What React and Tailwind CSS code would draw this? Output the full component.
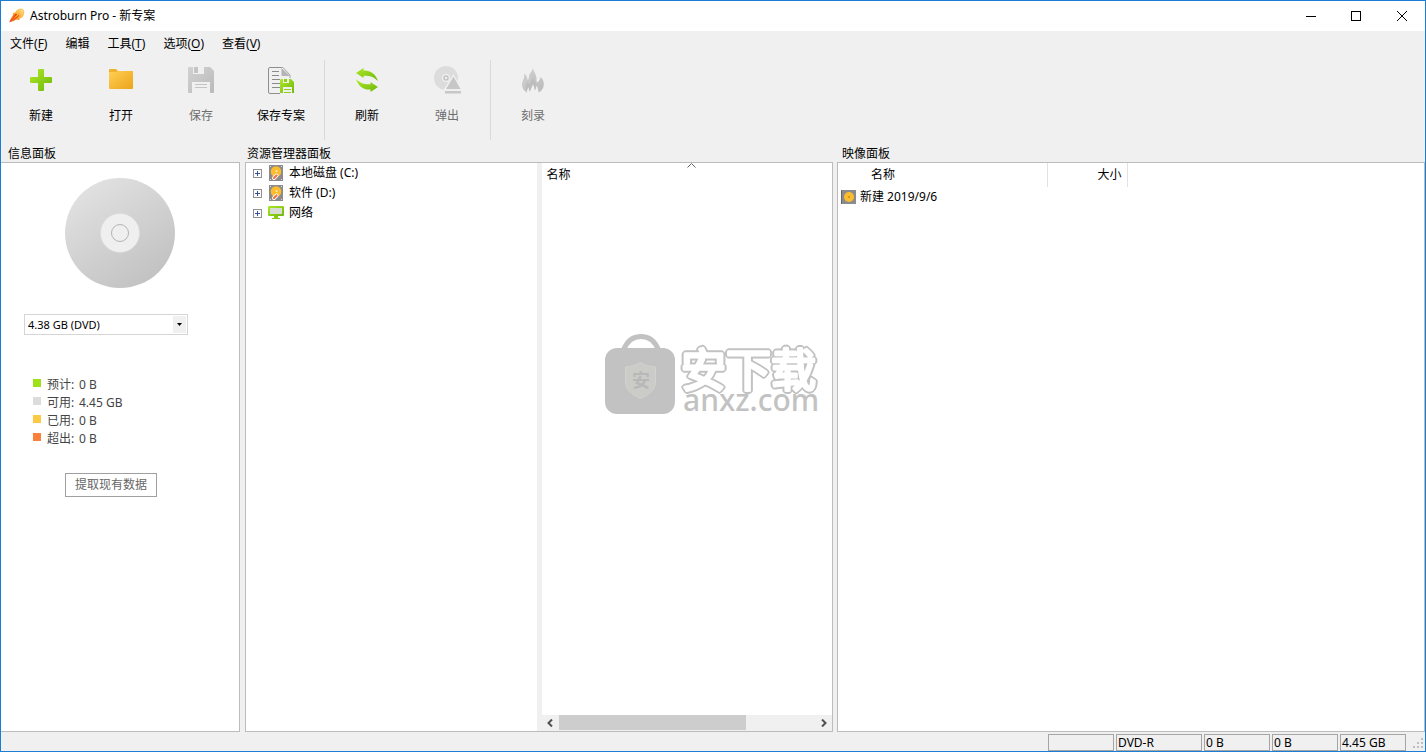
import { useState } from "react";

const menus = [
  { label: "文件", key: "F" },
  { label: "编辑" },
  { label: "工具", key: "T" },
  { label: "选项", key: "O" },
  { label: "查看", key: "V" },
];

const stats = [
  { label: "预计:", value: "0 B", color: "bg-[#a0e21a]" },
  { label: "可用:", value: "4.45 GB", color: "bg-[#dcdcdc]" },
  { label: "已用:", value: "0 B", color: "bg-[#fcc945]" },
  { label: "超出:", value: "0 B", color: "bg-[#fb813a]" },
];

const Gradients = () => (
  <svg width="0" height="0" className="absolute" aria-hidden="true">
    <defs>
      <linearGradient id="green" x1="0" y1="0" x2="1" y2="1">
        <stop offset="0" stopColor="#aeea26" />
        <stop offset="1" stopColor="#6fb60c" />
      </linearGradient>
      <linearGradient id="yellow" x1="0" y1="0" x2="1" y2="1">
        <stop offset="0" stopColor="#ffd055" />
        <stop offset="1" stopColor="#eca31a" />
      </linearGradient>
      <linearGradient id="gray" x1="0" y1="0" x2="1" y2="1">
        <stop offset="0" stopColor="#d2d2d2" />
        <stop offset="1" stopColor="#bababa" />
      </linearGradient>
      <linearGradient id="disc" x1="0.1" y1="0" x2="0.8" y2="1">
        <stop offset="0" stopColor="#e4e4e4" />
        <stop offset="1" stopColor="#c0c0c0" />
      </linearGradient>
      <linearGradient id="fire" x1="1" y1="0" x2="0" y2="1">
        <stop offset="0" stopColor="#fff0b0" />
        <stop offset="0.5" stopColor="#ffa51f" />
        <stop offset="1" stopColor="#f0582a" />
      </linearGradient>
    </defs>
  </svg>
);

const AppLogo = () => (
  <svg width="16" height="16" viewBox="0 0 16 16">
    <path d="M0.3 14.2C1.6 11 2.4 9 4 7.2L3.8 5.6L6.6 4C7.6 1.6 9.6 0.4 11.8 0.5C14.4 0.6 15.8 2.4 15.3 5.2C15 8 13 10.2 10.4 10.6L10.6 12L7 11.6C5 13 3 14 0.3 14.2Z" fill="url(#fire)" />
    <path d="M7.6 4.8C9 2 11 1.1 12.6 1.3C14.4 1.7 15 3.4 14.4 5.4C13.8 7.4 12.2 9 10.4 9.6" fill="none" stroke="#f7c56b" />
    <path d="M1.4 13.2L8 6M4.4 12L10 7.4M4.2 8.4L7 6.2" stroke="#e8431c" strokeWidth="1" />
  </svg>
);

const NewIcon = () => (
  <svg width="30" height="30" viewBox="0 0 30 30">
    <path d="M13 4H17Q18 4 18 5V12H25Q26 12 26 13V17Q26 18 25 18H18V25Q18 26 17 26H13Q12 26 12 25V18H5Q4 18 4 17V13Q4 12 5 12H12V5Q12 4 13 4Z" fill="url(#green)" />
  </svg>
);

const OpenIcon = () => (
  <svg width="30" height="30" viewBox="0 0 30 30">
    <path d="M3 5Q3 4 4 4H10L12 6H26Q27 6 27 7V12H3Z" fill="#efb02e" />
    <path d="M3 7H10L12 6H27V23Q27 24 26 24H4Q3 24 3 23Z" fill="url(#yellow)" />
  </svg>
);

const SaveIcon = () => (
  <svg width="30" height="30" viewBox="0 0 30 30">
    <path d="M2 3Q2 2 3 2H7V9H18V2H24L28 6V27Q28 28 27 28H24V17H6V28H3Q2 28 2 27Z" fill="url(#gray)" />
    <path d="M8 2H12V8H8Z" fill="#c4c4c4" />
    <path d="M9 19.500H21M9 22.500H21" stroke="#c4c4c4" />
  </svg>
);

const SaveProjectIcon = () => (
  <svg width="30" height="30" viewBox="0 0 30 30">
    <path d="M15 2.500H4Q2.500 2.500 2.500 4V27Q2.500 28.500 4 28.500H14" fill="none" stroke="#8f8f8f" />
    <path d="M15 2.500H17L24 10V13" fill="none" stroke="#a5a5a5" />
    <path d="M15.500 3V11H24Z" fill="#b4b4b4" />
    <path d="M6 6.500H13M6 10.500H13M6 14.500H14M6 18.500H14M6 22.500H14" stroke="#8b8b8b" />
    <path d="M15 14H17V18H23V14H25L28 17V28H26V22H17V28H14V15Z" fill="url(#green)" />
    <path d="M18 14H21V17H18Z" fill="#8fcf17" />
    <path d="M18 24.500H25M18 27.500H25" stroke="#8fcf17" />
  </svg>
);

const RefreshIcon = () => (
  <svg width="30" height="30" viewBox="0 0 30 30">
    <path d="M4 8L11.500 3V5.500C18 5 23.500 8.500 26 16C21.500 11.500 17 10.500 11.500 10.700V13Z" fill="url(#green)" />
    <path d="M26 22L18.500 27V24.500C11.500 25 6.500 21.500 4 14C8.500 18.500 13 19.500 18.500 19.200V17Z" fill="url(#green)" />
  </svg>
);

const EjectIcon = () => (
  <svg width="30" height="30" viewBox="0 0 30 30">
    <circle cx="14" cy="13" r="12" fill="#dcdcdc" />
    <circle cx="14" cy="13" r="4" fill="#f0f0f0" />
    <circle cx="14" cy="13" r="2" fill="none" stroke="#c2c2c2" strokeWidth="1.500" />
    <path d="M21.500 9L30 24V30H12V24Z" fill="#f0f0f0" />
    <path d="M21.500 11.500L28.500 24H14Z" fill="#c7c7c7" />
    <path d="M13 26H29V28.500H13Z" fill="#c7c7c7" />
  </svg>
);

const BurnIcon = () => (
  <svg width="30" height="30" viewBox="0 0 30 30">
    <path d="M15 3C15.500 7 18.500 9.500 18.500 13.500C18.500 15.500 18.500 16.500 19 17.500C20.500 16.500 22.500 15 22.500 12C25 14 26.500 17.500 25.500 21.500C25 24 23 26.500 20.500 27.500C20.500 25 19.500 22 18.500 20.500C18 22 17.500 24 17 25.500C16.500 23 16 21 15 19C14 21.500 12.500 24 12 26.500C11 25 11 23.500 10.500 22C9 24 9 25.500 9 27.500C5.500 26 4 23 4 19.500C4 17 5 15.500 5.500 14C6.500 12.500 6.500 10.500 6 8.500C8.500 10 9.500 12.500 9.500 15C10.500 14.500 11 13 11 11.500C11 8.500 14 7 15 3Z" fill="url(#gray)" />
    <path d="M15 12C15.500 15 18 16.500 18.500 20.500C18 22 17.500 24 17 25.500C16.500 23 16 21 15 19C14 21.500 12.500 24 12 26.500C11 25 11 23.500 10.500 22C9 24 9 25.500 9 27.500C7 25 7 20 9.500 17.500C10.500 18 11 18.500 11.500 19.500C12 16.500 14.500 15 15 12Z" fill="#bdbdbd" />
  </svg>
);

const DriveIcon = () => (
  <svg width="14" height="16" viewBox="0 0 14 16">
    <rect width="14" height="16" fill="#8b8b8b" />
    <path d="M1 1h1v1h-1zM12 1h1v1h-1zM1 14h1v1h-1zM12 14h1v1h-1z" fill="#ddd" />
    <circle cx="7" cy="6.500" r="5.300" fill="#fbbd2e" />
    <circle cx="7.500" cy="6" r="1" fill="#fff0c0" />
    <path d="M5 13L7.500 10.500" stroke="#fff" strokeWidth="4" strokeLinecap="round" />
    <path d="M5 13L7.500 10.500" stroke="#ef7843" strokeWidth="2.400" strokeLinecap="round" />
  </svg>
);

const NetworkIcon = () => (
  <svg width="16" height="14" viewBox="0 0 16 14">
    <rect width="16" height="10" rx="1" fill="url(#green)" />
    <rect x="2" y="2" width="12" height="6" fill="#d9dcd5" />
    <path d="M6 10H10V12H12V13H4V12H6Z" fill="#86c913" />
  </svg>
);

const DiscImageIcon = () => (
  <svg width="15" height="14" viewBox="0 0 15 14">
    <rect width="15" height="14" fill="#8b8b8b" />
    <path d="M0.500 0V14" stroke="#666" />
    <circle cx="8" cy="7" r="5" fill="#fbbd2e" />
    <circle cx="8" cy="7" r="1" fill="#c98e12" />
  </svg>
);

const tools = [
  [
    { label: "新建", icon: <NewIcon /> },
    { label: "打开", icon: <OpenIcon /> },
    { label: "保存", icon: <SaveIcon />, disabled: true },
    { label: "保存专案", icon: <SaveProjectIcon /> },
  ],
  [
    { label: "刷新", icon: <RefreshIcon /> },
    { label: "弹出", icon: <EjectIcon />, disabled: true },
  ],
  [{ label: "刻录", icon: <BurnIcon />, disabled: true }],
];

const tree = [
  { label: "本地磁盘 (C:)", icon: <DriveIcon /> },
  { label: "软件 (D:)", icon: <DriveIcon /> },
  { label: "网络", icon: <NetworkIcon /> },
];

const TitleBar = () => (
  <header className="h-[30px] shrink-0 bg-white flex items-center pl-2">
    <AppLogo />
    <h1 className="ml-[5px] flex-1">Astroburn Pro - 新专案</h1>
    <button aria-label="最小化" className="w-[45px] h-full flex items-center justify-center">
      <svg width="10" height="10"><path d="M0 5.500H10" stroke="#000" /></svg>
    </button>
    <button aria-label="最大化" className="w-[45px] h-full flex items-center justify-center">
      <svg width="10" height="10"><rect x="0.500" y="0.500" width="9" height="9" fill="none" stroke="#000" /></svg>
    </button>
    <button aria-label="关闭" className="w-[47px] h-full flex items-center justify-center">
      <svg width="10" height="10"><path d="M0 0L10 10M10 0L0 10" stroke="#000" /></svg>
    </button>
  </header>
);

const ToolButton = ({ label, icon, disabled }) => (
  <button disabled={disabled} className="w-20 pt-2 flex flex-col items-center gap-[13px] text-black disabled:text-[#6d6d6d]">
    {icon}
    <span>{label}</span>
  </button>
);

const Panel = ({ title, className, titleClass, boxClass, children }) => (
  <section className={`flex flex-col min-w-0 ${className}`}>
    <h2 className={`h-4 shrink-0 ${titleClass}`}>{title}</h2>
    <div className={`flex-1 min-h-0 bg-white border border-[#bcbcbc] ${boxClass}`}>{children}</div>
  </section>
);

const InfoPanel = () => {
  const [size, setSize] = useState("dvd");

  return (
    <Panel title="信息面板" className="w-[239px] mr-px shrink-0" titleClass="pl-[7px]" boxClass="border-l-0">
      <svg width="110" height="110" viewBox="0 0 110 110" className="mx-auto mt-[15px]">
        <circle cx="55" cy="55" r="55" fill="url(#disc)" />
        <circle cx="55" cy="55" r="19.500" fill="#efefef" stroke="#dadada" strokeWidth="0.500" />
        <circle cx="55" cy="55" r="8.500" fill="none" stroke="#b4b4b4" />
      </svg>
      <div className="relative w-[164px] ml-[23px] mt-[26px]">
        <select
          aria-label="光盘容量"
          value={size}
          onChange={(e) => setSize(e.target.value)}
          className="block w-full h-[21px] appearance-none border border-[#d5d5d5] bg-white pl-[3px] text-[11px] leading-4 text-black"
        >
          <option value="dvd">4.38 GB (DVD)</option>
        </select>
        <span className="absolute right-[2px] top-[2px] w-[13px] h-[17px] bg-[#f0f0f0] flex items-center justify-center pointer-events-none">
          <svg width="5" height="3"><path d="M0 0H5L2.500 3Z" fill="#000" /></svg>
        </span>
      </div>
      <ul className="mt-10 ml-8 text-[#444] leading-5">
        {stats.map((s) => (
          <li key={s.label} className="flex h-[18px]">
            <span className={`w-2 h-2 mt-1 mr-[6px] ${s.color}`} />
            <span className="w-8">{s.label}</span>
            <span>{s.value}</span>
          </li>
        ))}
      </ul>
      <button className="mt-[26px] ml-16 w-[92px] h-6 border border-[#a0a0a0] text-[#666]">提取现有数据</button>
    </Panel>
  );
};

const Watermark = () => (
  <svg width="216" height="92" viewBox="0 0 216 92" className="absolute left-[63px] top-[171px]">
    <path d="M18.500 16C22 7 28 2.500 36 2.500S50 7 53.500 16" fill="none" stroke="#c2c2c2" strokeWidth="5" />
    <rect y="14" width="70" height="66" rx="12" fill="#c2c2c2" />
    <path d="M35.500 28.500C40 31.500 45 32.500 50.500 33V48C50.500 55 45 60.500 35.500 64.500C26 60.500 20.500 55 20.500 48V33C26 32.500 31 31.500 35.500 28.500Z" fill="#cbccc8" stroke="#d2d2d0" />
    <text x="27" y="53" fontSize="18" fontWeight="700" fill="#b8b8b8">安</text>
    <text
      x="76"
      y="53"
      fontSize="45"
      fontWeight="400"
      fill="#fff"
      stroke="#fff"
      strokeWidth="3"
      strokeLinejoin="round"
      className="[filter:drop-shadow(1px_1px_#c2c2c2)_drop-shadow(-1px_-1px_#c2c2c2)_drop-shadow(1px_-1px_#c2c2c2)_drop-shadow(-1px_1px_#c2c2c2)]"
    >
      安下载
    </text>
    <text x="78" y="77" fontSize="30" fontWeight="500" fill="#c2c2c2">anxz.com</text>
  </svg>
);

const ScrollBar = () => (
  <div className="h-4 shrink-0 flex bg-[#f0f0f0]">
    <button aria-label="向左滚动" className="w-[17px] flex items-center justify-center">
      <svg width="6" height="8"><path d="M5 0.500L1.500 4L5 7.500" fill="none" stroke="#505050" strokeWidth="2" /></svg>
    </button>
    <div className="flex-1">
      <div className="w-[73%] h-[15px] bg-[#cdcdcd]" />
    </div>
    <button aria-label="向右滚动" className="w-[17px] flex items-center justify-center">
      <svg width="6" height="8"><path d="M1 0.500L4.500 4L1 7.500" fill="none" stroke="#505050" strokeWidth="2" /></svg>
    </button>
  </div>
);

const ExplorerPanel = () => (
  <Panel title="资源管理器面板" className="flex-1" titleClass="pl-[2px]" boxClass="flex">
    <ul className="flex-1 min-w-0">
      {tree.map((node) => (
        <li key={node.label} className="h-5 pl-[7px] flex items-center">
          <button aria-label="展开" className="shrink-0">
            <svg width="9" height="9" className="block">
              <rect x="0.500" y="0.500" width="8" height="8" fill="#fafafa" stroke="#919191" />
              <path d="M2 4.500H7M4.500 2V7" stroke="#3a4f9a" />
            </svg>
          </button>
          <span className="w-4 ml-[6px] mr-[5px] flex justify-center">{node.icon}</span>
          {node.label}
        </li>
      ))}
    </ul>
    <div className="w-[5px] bg-[#f0f0f0]" />
    <div className="relative flex-1 min-w-0 flex flex-col">
      <div className="flex-1 pl-[5px] pt-1">名称</div>
      <svg width="9" height="5" className="absolute left-1/2 top-0"><path d="M0.500 4.500L4.500 0.500L8.500 4.500" fill="none" stroke="#666" /></svg>
      <Watermark />
      <ScrollBar />
    </div>
  </Panel>
);

const ImagePanel = () => (
  <Panel title="映像面板" className="flex-1" titleClass="pl-[5px]">
    <table className="w-full table-fixed">
      <thead>
        <tr className="h-6">
          <th className="w-[209px] pl-[33px] text-left font-normal border-r border-[#e2e2e2]">名称</th>
          <th className="w-20 pr-[5px] text-right font-normal border-r border-[#e2e2e2]">大小</th>
          <td />
        </tr>
      </thead>
      <tbody>
        <tr className="h-5">
          <td>
            <span className="flex items-center gap-1 pl-[3px]">
              <DiscImageIcon />
              新建 2019/9/6
            </span>
          </td>
          <td />
          <td />
        </tr>
      </tbody>
    </table>
  </Panel>
);

const StatusCell = ({ wide, children }) => (
  <span className={`h-[17px] border border-[#a5a5a5] pl-px ${wide ? "w-[86px]" : "w-[66px]"}`}>{children}</span>
);

const StatusBar = () => (
  <footer className="h-[19px] shrink-0 pt-[2px] flex justify-end gap-[2px] leading-4">
    <StatusCell />
    <StatusCell wide>DVD-R</StatusCell>
    <StatusCell>0 B</StatusCell>
    <StatusCell>0 B</StatusCell>
    <StatusCell>4.45 GB</StatusCell>
    <svg width="17" height="17">
      <path d="M13 4h2v2h-2zM9 8h2v2h-2zM13 8h2v2h-2zM5 12h2v2h-2zM9 12h2v2h-2zM13 12h2v2h-2z" fill="#bfbfbf" />
    </svg>
  </footer>
);

const App = () => (
  <div className="h-screen flex flex-col bg-[#f0f0f0] border border-[#1a7fd4] text-black text-xs leading-4 font-['Noto_Sans','Noto_Sans_CJK_SC',sans-serif] select-none">
    <Gradients />
    <TitleBar />
    <nav className="h-[26px] shrink-0 flex items-center gap-[18px] pl-[9px]">
      {menus.map((m) => (
        <button key={m.label}>
          {m.label}
          {m.key && <>(<u className="underline-offset-2">{m.key}</u>)</>}
        </button>
      ))}
    </nav>
    <div className="h-[89px] shrink-0 flex">
      {tools.map((group, i) => (
        <div key={i} className="flex">
          {i > 0 && <div className="w-px h-20 mt-[3px] ml-[3px] mr-[2px] bg-[#d9d9d9]" />}
          {group.map((t) => (
            <ToolButton key={t.label} {...t} />
          ))}
        </div>
      ))}
    </div>
    <main className="flex-1 min-h-0 flex gap-1">
      <InfoPanel />
      <ExplorerPanel />
      <ImagePanel />
    </main>
    <StatusBar />
  </div>
);

export default App;
